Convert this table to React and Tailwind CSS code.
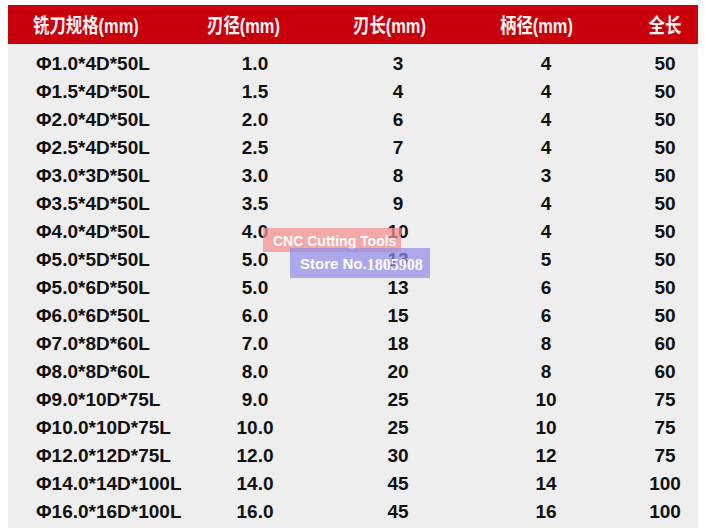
const rows = [
  ["Φ1.0*4D*50L", "1.0", "3", "4", "50"],
  ["Φ1.5*4D*50L", "1.5", "4", "4", "50"],
  ["Φ2.0*4D*50L", "2.0", "6", "4", "50"],
  ["Φ2.5*4D*50L", "2.5", "7", "4", "50"],
  ["Φ3.0*3D*50L", "3.0", "8", "3", "50"],
  ["Φ3.5*4D*50L", "3.5", "9", "4", "50"],
  ["Φ4.0*4D*50L", "4.0", "10", "4", "50"],
  ["Φ5.0*5D*50L", "5.0", "13", "5", "50"],
  ["Φ5.0*6D*50L", "5.0", "13", "6", "50"],
  ["Φ6.0*6D*50L", "6.0", "15", "6", "50"],
  ["Φ7.0*8D*60L", "7.0", "18", "8", "60"],
  ["Φ8.0*8D*60L", "8.0", "20", "8", "60"],
  ["Φ9.0*10D*75L", "9.0", "25", "10", "75"],
  ["Φ10.0*10D*75L", "10.0", "25", "10", "75"],
  ["Φ12.0*12D*75L", "12.0", "30", "12", "75"],
  ["Φ14.0*14D*100L", "14.0", "45", "14", "100"],
  ["Φ16.0*16D*100L", "16.0", "45", "16", "100"],
];

const headers = ["铣刀规格(mm)", "刃径(mm)", "刃长(mm)", "柄径(mm)", "全长"];

export default function App() {
  return (
    <div
      className="w-[705px] h-[528px] bg-white pt-[5px] pl-[8px] pr-[7px] overflow-hidden"
      style={{ fontFamily: '"Liberation Sans", "Noto Sans CJK SC", sans-serif' }}
    >
      <div className="relative bg-[#eeeeee] h-[523px]">
        {/* Header */}
        <div className="flex items-center h-[39px] bg-[#c7000b] text-[#fdf3f3] font-bold text-[20px] pt-[2px]">
          <div className="w-[177px] pl-[25px]">
            <span className="inline-block origin-left scale-x-[0.82]">{headers[0]}</span>
          </div>
          <div className="w-[116px] text-center">
            <span className="inline-block scale-x-[0.82]">{headers[1]}</span>
          </div>
          <div className="w-[176px] text-center">
            <span className="inline-block scale-x-[0.82]">{headers[2]}</span>
          </div>
          <div className="w-[118px] text-center">
            <span className="inline-block scale-x-[0.82]">{headers[3]}</span>
          </div>
          <div className="ml-[37px] w-[66px] text-center">
            <span className="inline-block scale-x-[0.82]">{headers[4]}</span>
          </div>
        </div>

        {/* Rows */}
        <div className="pt-[6px] text-[19px] font-bold text-[#111111]">
          {rows.map((r, i) => (
            <div key={i} className="flex items-center h-[28px]">
              <div className="w-[192px] pl-[28px]">{r[0]}</div>
              <div className="w-[110px] text-center">{r[1]}</div>
              <div className="w-[176px] text-center">{r[2]}</div>
              <div className="w-[120px] text-center">{r[3]}</div>
              <div className="ml-[26px] w-[66px] text-center">{r[4]}</div>
            </div>
          ))}
        </div>

        {/* Watermarks */}
        <div className="absolute left-[255px] top-[223px] w-[138px] h-[24px] bg-[#f59090]/75 flex items-center pl-[10px] pt-[3px] text-white font-bold text-[14px]">
          CNC Cutting Tools
        </div>
        <div className="absolute left-[282px] top-[243px] w-[140px] h-[30px] bg-[#8e8beb]/70 flex items-center pl-[10px] pt-[3px] text-white font-bold text-[15px]">
          Store No.
          <span style={{ fontFamily: '"Liberation Serif", serif' }} className="text-[16px]">1805908</span>
        </div>
      </div>
    </div>
  );
}
